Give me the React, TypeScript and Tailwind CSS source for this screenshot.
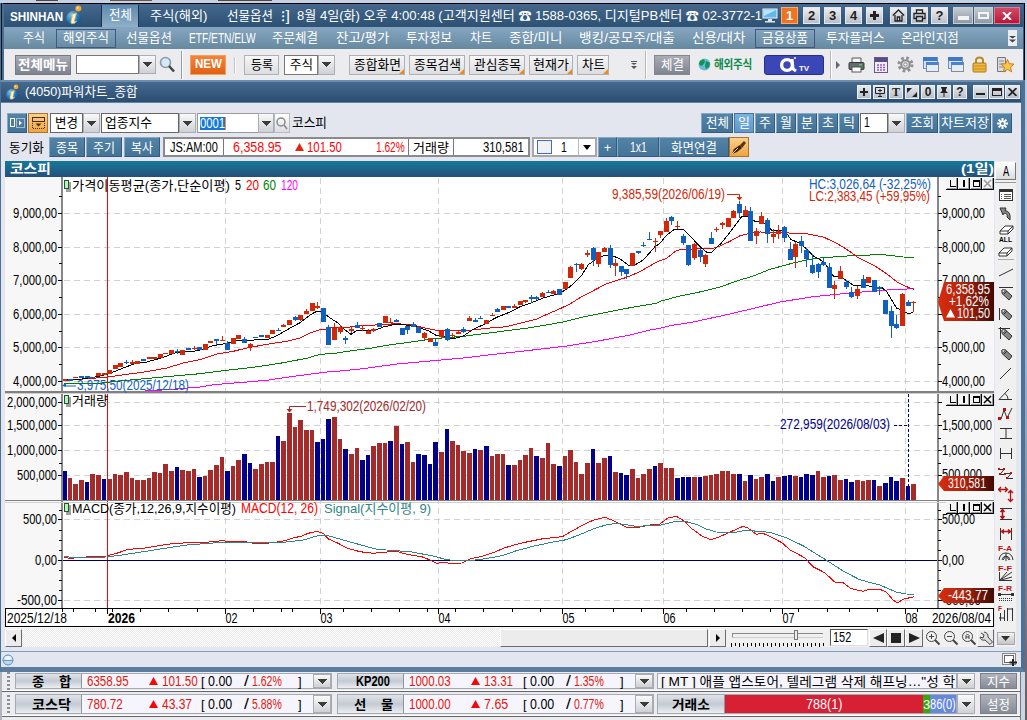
import { useLayoutEffect, useRef, type ReactNode } from "react";

const HANGUL = /[가-힣]/;

/* Text squeezed or stretched to the width of its box, like a fixed-pitch bitmap font. */
function Fit({ c, children }: { c: string; children: string }) {
  const outer = useRef<HTMLSpanElement>(null);
  const inner = useRef<HTMLSpanElement>(null);
  useLayoutEffect(() => {
    const o = outer.current;
    const i = inner.current;
    if (o && i && i.offsetWidth > 0) {
      i.style.transform = `scaleX(${o.clientWidth / i.offsetWidth})`;
    }
  });
  const size = HANGUL.test(children) || c.includes("text-[") ? "" : "text-[14px]";
  return (
    <span ref={outer} className={`block shrink-0 whitespace-nowrap ${c}`}>
      <span ref={inner} className={`inline-block origin-left whitespace-pre align-top ${size}`}>{children}</span>
    </span>
  );
}

function Arrow({ c = "" }: { c?: string }) {
  return (
    <span className={`flex shrink-0 items-center justify-center border border-[#a9adb5] bg-linear-to-b from-[#fafafa] to-[#cfd0d4] ${c}`}>
      <svg width="9" height="5" shapeRendering="crispEdges"><path d="M0 0H9L4.5 5Z" fill="#3c3c3c" /></svg>
    </span>
  );
}

const SYS = "flex h-[17px] shrink-0 items-center justify-center border border-[#e4e8ee] bg-linear-to-b from-[#eceef2] to-[#b9bfc9] text-[13px] font-bold leading-none text-[#222]";

function Sphere({ s }: { s: string }) {
  return (
    <svg className={`shrink-0 ${s}`} viewBox="0 0 16 21">
      <defs>
        <radialGradient id="ball" cx="0.35" cy="0.3" r="0.8">
          <stop offset="0" stopColor="#7cc4ee" />
          <stop offset="0.6" stopColor="#1c79bd" />
          <stop offset="1" stopColor="#0b4a86" />
        </radialGradient>
      </defs>
      <circle cx="7.5" cy="13" r="7.2" fill="url(#ball)" />
      <path d="M5 9.5L10.5 8L8.5 16Q8.6 17.6 11 16Q8 19.8 5.5 18.6Q4.3 17.8 5.2 15L6.3 10.8Z" fill="#fff3d8" stroke="#e9a53c" strokeWidth=".8" />
      <circle cx="12.3" cy="3.6" r="3" fill="#f0a83c" />
      <circle cx="11.6" cy="2.9" r="1" fill="#ffe0a0" />
    </svg>
  );
}

function Header() {
  return (
    <div className="flex h-[23px] items-center bg-linear-to-b from-[#45688c] to-[#2c5173] text-[13px] leading-[20px] text-white">
      <Fit c="ml-[6px] w-[53px] text-[13px] font-bold pt-[3px]">SHINHAN</Fit>
      <Sphere s="ml-[3px] h-[21px] w-[16px]" />
      <div className="ml-[19px] flex h-[22px] w-[38px] justify-center self-end border-l border-[#1c2f55] bg-linear-to-b from-[#5f8aae] to-[#8fb0c8] border-r">
        <Fit c="w-[23px]">전체</Fit>
      </div>
      <Fit c="ml-[11px] w-[58px]">주식(해외)</Fit>
      <Fit c="ml-[19px] w-[46px]">선물옵션</Fit>
      <Fit c="ml-[8px] w-[9px]">⁝]</Fit>
      <Fit c="ml-[7px] w-[465px]">8월 4일(화) 오후 4:00:48 (고객지원센터 ☎ 1588-0365, 디지털PB센터 ☎ 02-3772-1</Fit>
      <svg width="17" height="15" className="shrink-0" viewBox="0 0 17 15">
        <rect x="1" y="1" width="14" height="9" fill="#63b8ea" stroke="#e8f3fa" />
        <path d="M2 2H14L2 8Z" fill="#b7e2f8" />
        <path d="M6 11H10V13H13V14.5H3V13H6Z" fill="#dfe6ec" />
      </svg>
      <span className="ml-[2px] flex h-[17px] w-[17px] shrink-0 items-center justify-center border border-[#f8ad70] bg-[#ee7424] text-[13px] font-bold">1</span>
      <span className={`ml-[5px] w-[17px] ${SYS}`}>2</span>
      <span className={`ml-[4px] w-[17px] ${SYS}`}>3</span>
      <span className={`ml-[4px] w-[17px] ${SYS}`}>4</span>
      <span className={`ml-[4px] w-[17px] ${SYS}`}>
        <svg width="9" height="9" shapeRendering="crispEdges"><path d="M3 0H6V3H9V6H6V9H3V6H0V3H3Z" fill="#222" /></svg>
      </span>
      <span className={`ml-[7px] w-[17px] ${SYS}`}>
        <svg width="13" height="13" fill="none" stroke="#222" strokeWidth="1.3"><path d="M.8 6.5L6.5 1L12.2 6.5M3 6V12H10V6M5.3 12V8H7.7V12" /></svg>
      </span>
      <span className={`ml-[4px] w-[17px] ${SYS}`}>
        <svg width="13" height="13" fill="none" stroke="#222" strokeWidth="1.3"><path d="M3.5 4V1H9.5V4M3 9.5H1V4.5H12V9.5H10M3.5 7.5H9.5V12H3.5Z" /></svg>
      </span>
      <span className={`ml-[3px] w-[17px] ${SYS}`}>?</span>
      <span className="ml-[5px] flex h-[17px] w-[20px] shrink-0 items-center justify-center border border-[#c9ced4] bg-linear-to-b from-[#c4cbd1] to-[#8f9aa2]"><span className="mt-[4px] h-[4px] w-[11px] bg-[#f4f4f4]" /></span>
      <span className="ml-[1px] flex h-[17px] w-[19px] shrink-0 items-center justify-center border border-[#c9ced4] bg-linear-to-b from-[#c4cbd1] to-[#8f9aa2]"><span className="h-[7px] w-[11px] border-2 border-[#f4f4f4]" /></span>
      <span className="ml-[1px] flex h-[17px] w-[26px] shrink-0 items-center justify-center border border-[#e07a90] bg-linear-to-b from-[#d04a66] to-[#b8123a]">
        <svg width="10" height="8" stroke="#fff" strokeWidth="2"><path d="M1 0L9 8M9 0L1 8" /></svg>
      </span>
    </div>
  );
}

function Menu() {
  return (
    <div className="flex h-[22px] items-center bg-linear-to-b from-[#87a6c2] to-[#66899f] text-[13px] leading-[20px] text-white">
      <Fit c="ml-[19px] w-[22px]">주식</Fit>
      <span className="ml-[11px] flex h-[19px] w-[60px] shrink-0 items-center justify-center border border-[#3e5a82]"><Fit c="w-[46px]">해외주식</Fit></span>
      <Fit c="ml-[10px] w-[46px]">선물옵션</Fit>
      <Fit c="ml-[17px] w-[67px]">ETF/ETN/ELW</Fit>
      <Fit c="ml-[16px] w-[46px]">주문체결</Fit>
      <Fit c="ml-[18px] w-[53px]">잔고/평가</Fit>
      <Fit c="ml-[17px] w-[46px]">투자정보</Fit>
      <Fit c="ml-[18px] w-[22px]">차트</Fit>
      <Fit c="ml-[17px] w-[53px]">종합/미니</Fit>
      <Fit c="ml-[17px] w-[96px]">뱅킹/공모주/대출</Fit>
      <Fit c="ml-[17px] w-[53px]">신용/대차</Fit>
      <span className="ml-[10px] flex h-[19px] w-[60px] shrink-0 items-center justify-center border border-[#3e5a82]"><Fit c="w-[46px]">금융상품</Fit></span>
      <Fit c="ml-[11px] w-[59px]">투자플러스</Fit>
      <Fit c="ml-[16px] w-[58px]">온라인지점</Fit>
      <span className="ml-[49px] flex h-[16px] w-[9px] shrink-0 items-center justify-center bg-[#e9edf1]">
        <svg width="7" height="10" fill="#444"><path d="M1 1H6M0 3L3.5 3L7 3L3.5 5.5ZM0 6.5H7L3.5 9.5Z" /></svg>
      </span>
    </div>
  );
}

const TB = "flex h-[20px] shrink-0 items-center justify-center border border-[#b0b1b6] bg-linear-to-b from-[#f6f6f7] to-[#dcdde0] relative";

function ToolBtn({ c, w, children }: { c: string; w: string; children: string }) {
  return (
    <span className={`${TB} ${c}`}>
      <Fit c={w}>{children}</Fit>
      <svg className="absolute right-0 bottom-0" width="5" height="5"><path d="M5 0V5H0Z" fill="#f08a1c" /></svg>
    </span>
  );
}

function WindowsIcon({ c }: { c: string }) {
  return (
    <svg width="17" height="17" className={`shrink-0 ${c}`} shapeRendering="crispEdges">
      <rect x="1" y="1" width="14" height="11" fill="#d5e4f7" stroke="#6d8fc0" />
      <rect x="1" y="1" width="14" height="4" fill="#3f78c8" />
      <rect x="4" y="6" width="12" height="9" fill="#e8edf4" stroke="#7c8ca5" />
      <rect x="4" y="6" width="12" height="3" fill="#4a82cc" />
    </svg>
  );
}

function Toolbar() {
  return (
    <div className="flex h-[31px] items-center bg-[#ececee] text-[13px] leading-[19px] text-black">
      <span className="ml-[11px] flex h-[20px] w-[56px] shrink-0 items-center justify-center border border-[#777b86] bg-linear-to-b from-[#a9acb5] to-[#7e828e] text-white"><Fit c="w-[50px] font-bold">전체메뉴</Fit></span>
      <span className="ml-[5px] h-[19px] w-[63px] shrink-0 border border-[#777] bg-white" />
      <Arrow c="h-[19px] w-[17px]" />
      <svg width="17" height="17" className="ml-[3px] shrink-0"><circle cx="6.5" cy="6.5" r="5" fill="#d4eaf6" stroke="#8c9aa8" strokeWidth="1.6" /><path d="M10 10L15 15.5" stroke="#444" strokeWidth="2.6" /></svg>
      <span className="ml-[5px] h-[28px] w-[2px] shrink-0 border-r border-white bg-[#8ba0ac]" />
      <span className="ml-[7px] flex h-[20px] w-[36px] shrink-0 items-center justify-center border border-[#f0a060] bg-linear-to-b from-[#f58436] to-[#e06010] text-white"><Fit c="w-[27px] text-[12px] font-extrabold">NEW</Fit></span>
      <span className="ml-[8px] h-[16px] w-[2px] shrink-0 border-r border-white bg-[#c4c4c8]" />
      <span className={`ml-[8px] w-[35px] ${TB}`}><Fit c="w-[22px]">등록</Fit></span>
      <span className="ml-[5px] flex h-[20px] w-[34px] shrink-0 items-center justify-center border border-[#777] bg-white"><Fit c="w-[23px]">주식</Fit></span>
      <Arrow c="h-[20px] w-[17px]" />
      <ToolBtn c="ml-[14px] w-[56px]" w="w-[47px]">종합화면</ToolBtn>
      <ToolBtn c="ml-[4px] w-[56px]" w="w-[47px]">종목검색</ToolBtn>
      <ToolBtn c="ml-[4px] w-[56px]" w="w-[47px]">관심종목</ToolBtn>
      <ToolBtn c="ml-[4px] w-[44px]" w="w-[36px]">현재가</ToolBtn>
      <ToolBtn c="ml-[4px] w-[32px]" w="w-[23px]">차트</ToolBtn>
      <svg width="6" height="9" fill="#555" className="ml-[22px] shrink-0"><path d="M0 1H6V2H0ZM0 3H6L3 5ZM0 6H6L3 9Z" /></svg>
      <span className="ml-[8px] h-[28px] w-[2px] shrink-0 border-r border-white bg-[#b6b9be]" />
      <span className="ml-[7px] flex h-[20px] w-[36px] shrink-0 items-center justify-center border border-[#858893] bg-linear-to-b from-[#a9acb5] to-[#80848f] text-white"><Fit c="w-[23px]">체결</Fit></span>
      <svg width="13" height="13" className="ml-[8px] shrink-0"><circle cx="6.5" cy="6.5" r="6" fill="#69b9da" /><path d="M2 3L6 1L7 4L5 7L3 8L1 6ZM8 3L12 5L11 9L8 11L7 8Z" fill="#149250" /></svg>
      <Fit c="ml-[3px] w-[38px] pt-[2px] text-[12px] font-bold text-[#0b8a4c] tracking-tight">해외주식</Fit>
      <span className="ml-[12px] flex h-[20px] w-[60px] shrink-0 items-center justify-center rounded-[3px] border border-[#26308c] bg-[#3b47b6]">
        <svg width="20" height="17" fill="none" stroke="#fff"><circle cx="8" cy="9" r="5.4" strokeWidth="3.4" /><path d="M13 3L14 13L17 15" strokeWidth="3" /><circle cx="16" cy="2" r="1" fill="#fff" stroke="none" /></svg>
        <span className="mt-[8px] text-[8px] font-bold leading-none text-white">TV</span>
      </span>
      <span className="ml-[6px] h-[28px] w-[2px] shrink-0 border-r border-white bg-[#b6b9be]" />
      <svg width="4" height="8" className="ml-[4px] shrink-0"><path d="M0 0L4 4L0 8Z" fill="#667" /></svg>
      <svg width="17" height="16" className="ml-[8px] shrink-0"><path d="M4 1H13V6H4Z" fill="#f4f4f4" stroke="#555" /><rect x="1" y="5.5" width="15" height="7" rx="1" fill="#666b70" stroke="#33383c" /><rect x="4" y="10" width="9" height="5" fill="#fff" stroke="#555" /><rect x="11" y="7" width="3" height="1.5" fill="#4bd04b" /></svg>
      <svg width="16" height="16" className="ml-[8px] shrink-0"><rect x="1.5" y=".5" width="13" height="15" fill="#efedf5" stroke="#655a86" /><rect x="2" y="1" width="12" height="4" fill="#5b4a88" /><path d="M4 8H12M4 10.5H12M4 13H12" stroke="#9a5ac0" strokeWidth="1.5" strokeDasharray="2 1" /></svg>
      <svg width="17" height="17" className="ml-[8px] shrink-0"><circle cx="8.5" cy="8.5" r="6.5" fill="none" stroke="#8f8f8f" strokeWidth="3" strokeDasharray="2.6 2.5" /><circle cx="8.5" cy="8.5" r="4.3" fill="#d8d8d8" stroke="#8d8d8d" strokeWidth="2" /><circle cx="8.5" cy="8.5" r="1.6" fill="#fff" stroke="#888" /></svg>
      <WindowsIcon c="ml-[8px]" />
      <WindowsIcon c="ml-[8px]" />
      <svg width="15" height="17" className="ml-[8px] shrink-0"><path d="M4 8V4.5Q4 1.5 7.5 1.5T11 4.5V8" fill="none" stroke="#b98a2a" strokeWidth="2" /><rect x="1" y="7" width="13" height="9" rx="1" fill="#f0b93a" stroke="#a9781c" /><path d="M2 10H13M2 13H13" stroke="#c48d22" /></svg>
      <svg width="19" height="17" className="ml-[9px] shrink-0"><path d="M1.500 1.500H9.500V15.500H1.500Z" fill="#ddd" stroke="#777" /><path d="M3 5H8M3 8H8M3 11H8" stroke="#888" /><path d="M11.5 3.500L13.300 7.700L18 8.100L14.500 11.200L15.600 15.800L11.500 13.400L7.400 15.800L8.500 11.200L5 8.100L9.700 7.700Z" fill="#f9c74a" stroke="#d07a1c" /></svg>
    </div>
  );
}

const WB = "flex h-[14px] shrink-0 items-center justify-center border border-[#eceff3] bg-linear-to-b from-[#e6e9ee] to-[#b8bec9] text-[12px] font-bold leading-none text-[#222]";

function TitleBar() {
  return (
    <div className="flex h-[21px] shrink-0 items-center border-b border-[#5c86a6] bg-linear-to-b from-[#46698e] to-[#2a4d71] text-[13px] leading-[18px] text-white">
      <Sphere s="ml-[5px] h-[17px] w-[13px]" />
      <Fit c="ml-[6px] w-[113px]">(4050)파워차트_종합</Fit>
      <span className={`ml-auto w-[14px] ${WB}`}><svg width="8" height="8" shapeRendering="crispEdges"><path d="M3 0H5V3H8V5H5V8H3V5H0V3H3Z" fill="#222" /></svg></span>
      <span className={`ml-[2px] w-[14px] ${WB}`}><svg width="10" height="10" fill="none" stroke="#222"><path d="M.5 .5H9.500V6.500H.5ZM3 9.500H7M5 7V9M3 3.500H7M5 2V5" /></svg></span>
      <span className={`ml-[2px] w-[14px] ${WB} font-['Liberation_Serif',serif]`}>T</span>
      <span className={`ml-[2px] w-[14px] ${WB}`}><svg width="10" height="9" fill="#222"><path d="M0 0H5L0 5ZM10 9H5L10 4Z" /></svg></span>
      <span className={`ml-[2px] w-[14px] ${WB}`}>0</span>
      <span className={`ml-[2px] w-[14px] ${WB}`}><svg width="8" height="10" fill="#222"><path d="M1 0H7V1.500H6V4L8 6H4.500V10H3.500V6H0L2 4V1.500H1Z" /></svg></span>
      <span className={`ml-[2px] w-[14px] ${WB}`}>?</span>
      <span className={`ml-[6px] w-[15px] ${WB}`}><span className="mt-[4px] h-[2px] w-[9px] bg-[#222]" /></span>
      <span className={`ml-[1px] w-[15px] ${WB}`}><span className="h-[8px] w-[10px] border border-t-[3px] border-[#222]" /></span>
      <span className={`mr-[1px] ml-[1px] w-[15px] ${WB}`}><svg width="9" height="8" stroke="#222" strokeWidth="1.800"><path d="M.5 0L8.500 8M8.500 0L.5 8" /></svg></span>
    </div>
  );
}

const BB = "flex h-[20px] shrink-0 items-center justify-center border border-[#335a80] border-t-[#86a9c4] border-l-[#86a9c4] bg-linear-to-b from-[#5383a6] to-[#437397] text-white";
const OR = "flex h-[20px] shrink-0 items-center justify-center border border-[#a8762c] bg-linear-to-b from-[#fcd08a] to-[#f0a43c]";

function Row1() {
  return (
    <div className="flex h-[20px] items-center text-[13px] leading-[18px] text-black">
      <span className={`ml-[6px] w-[20px] ${BB}`}><svg width="15" height="12" fill="none" stroke="#fff"><rect x=".5" y="1.500" width="4" height="8" /><rect x="6.500" y="1.500" width="8" height="9" strokeDasharray="1 1" /><path d="M9 3.500L12 6L9 8.500Z" fill="#fff" stroke="none" /></svg></span>
      <span className={`ml-[1px] w-[20px] ${OR}`}><svg width="15" height="14" fill="none" stroke="#4a2a00"><rect x="1.500" y="1.500" width="12" height="4" /><path d="M1.500 7V12.500H13.500V7" strokeDasharray="1 1" /><path d="M4.500 7.500H10.500L7.500 10.500Z" fill="#4a2a00" stroke="none" /></svg></span>
      <span className="ml-[2px] flex h-[20px] w-[33px] shrink-0 items-center justify-center border border-[#666] bg-white"><Fit c="w-[23px]">변경</Fit></span>
      <Arrow c="h-[20px] w-[17px]" />
      <span className="ml-[1px] flex h-[20px] w-[78px] shrink-0 items-center border border-[#666] bg-white pl-[3px]"><Fit c="w-[47px]">업종지수</Fit></span>
      <Arrow c="h-[20px] w-[17px]" />
      <span className="ml-[1px] flex h-[20px] w-[68px] shrink-0 items-center border border-[#999] bg-white pl-[2px]"><span className="flex h-[13px] items-center border-r border-[#ff8a2a] bg-[#1478d8] text-white"><Fit c="w-[25px]">0001</Fit></span></span>
      <Arrow c="-ml-[7px] h-[20px] w-[16px]" />
      <span className="flex h-[20px] w-[16px] shrink-0 items-center justify-center border border-[#b8bac0] bg-linear-to-b from-white to-[#dcdde1]"><svg width="12" height="13" fill="none" stroke="#888" strokeWidth="1.500"><circle cx="5" cy="5" r="4" /><path d="M8 8L11 12" /></svg></span>
      <Fit c="ml-[2px] w-[35px]">코스피</Fit>
      <span className={`ml-auto w-[32px] ${BB}`}><Fit c="w-[23px]">전체</Fit></span>
      <span className="ml-[1px] flex h-[20px] w-[20px] shrink-0 items-center justify-center border border-[#4b7299] bg-linear-to-b from-[#78b2e0] to-[#6098c8] text-white">일</span>
      <span className={`ml-[1px] w-[20px] ${BB}`}>주</span>
      <span className={`ml-[1px] w-[20px] ${BB}`}>월</span>
      <span className={`ml-[1px] w-[20px] ${BB}`}>분</span>
      <span className={`ml-[1px] w-[20px] ${BB}`}>초</span>
      <span className={`ml-[1px] w-[20px] ${BB}`}>틱</span>
      <span className="ml-[1px] h-[20px] w-[28px] shrink-0 border border-[#666] bg-white pl-[3px] leading-[17px]"><Fit c="w-[6px]">1</Fit></span>
      <Arrow c="h-[20px] w-[17px]" />
      <span className={`ml-[1px] w-[32px] ${BB}`}><Fit c="w-[23px]">조회</Fit></span>
      <span className={`ml-[1px] w-[52px] ${BB}`}><Fit c="w-[48px]">차트저장</Fit></span>
      <span className={`mr-[9px] ml-[1px] w-[20px] ${BB}`}><svg width="11" height="11" stroke="#fff" strokeWidth="2"><path d="M5.500 0V11M0 5.500H11M1.600 1.600L9.400 9.400M9.400 1.600L1.600 9.400" /><circle cx="5.500" cy="5.500" r="1.500" fill="#4f80a4" stroke="none" /></svg></span>
    </div>
  );
}

function Row2() {
  return (
    <div className="mt-[4px] flex h-[20px] items-center text-[13px] leading-[17px] text-black">
      <Fit c="ml-[8px] w-[35px]">동기화</Fit>
      <span className={`ml-[5px] w-[36px] ${BB}`}><Fit c="w-[22px]">종목</Fit></span>
      <span className={`ml-[1px] w-[36px] ${BB}`}><Fit c="w-[22px]">주기</Fit></span>
      <span className={`ml-[2px] w-[36px] ${BB}`}><Fit c="w-[22px]">복사</Fit></span>
      <span className="ml-[3px] flex h-[20px] w-[367px] shrink-0 items-center border-2 border-[#8b8b8b] bg-white">
        <span className="flex h-full w-[59px] shrink-0 justify-center border-r border-[#777]"><Fit c="w-[48px]">JS:AM:00</Fit></span>
        <span className="flex h-full w-[185px] shrink-0 items-center border-r border-[#777] text-[#f80808]">
          <Fit c="ml-[9px] w-[49px]">6,358.95</Fit>
          <svg width="9" height="8" className="ml-[13px] shrink-0"><path d="M4.500 0L9 8H0Z" fill="#e02810" /></svg>
          <Fit c="ml-[3px] w-[35px]">101.50</Fit>
          <Fit c="ml-[34px] w-[29px]">1.62%</Fit>
        </span>
        <span className="flex h-full w-[45px] shrink-0 justify-center border-r border-[#777]"><Fit c="w-[36px]">거래량</Fit></span>
        <Fit c="ml-[29px] w-[41px]">310,581</Fit>
      </span>
      <span className="ml-[2px] flex h-[20px] w-[65px] shrink-0 items-center border-2 border-[#a8a8a8] bg-white">
        <span className="ml-[3px] h-[14px] w-[15px] border border-[#4069d8] bg-[#f0f1f5]" />
        <Fit c="mr-[10px] ml-[9px] w-[6px]">1</Fit>
        <span className="ml-auto flex h-full w-[17px] items-center justify-center border-l border-[#bbb]"><svg width="8" height="5"><path d="M0 0H8L4 5Z" /></svg></span>
      </span>
      <span className={`ml-[1px] w-[19px] ${BB}`}>+</span>
      <span className={`w-[42px] ${BB}`}><Fit c="w-[17px]">1x1</Fit></span>
      <span className={`w-[70px] ${BB}`}><Fit c="w-[46px]">화면연결</Fit></span>
      <span className={`w-[20px] ${OR}`}><svg width="16" height="15"><path d="M1 14L3 9L9 5L11 8L6 12Z" fill="#3a2208" /><path d="M9 5L13 1L15 3L11 8Z" fill="#5a3510" /><path d="M1 14L7 8" stroke="#f0d0a0" /></svg></span>
    </div>
  );
}

/* ---------------- chart data ---------------- */
const barX = (i: number) => Math.round(62.2 + 5.6225 * i);

/* colour and height of each volume bar, in thirds of a pixel from y = 390 */
const VOLUME =
  "b243 r264 r282 r270 b276 r252 r255 b267 r267 r252 r255 r246 r264 r270 r270 r264 r246 r249 r222 r243 b231 r240 r243 r237 b261 r258 r240 r225 r201 b243 r228 r210 b192 b219 r237 r222 r216 r216 b138 r153 r69 r111 r90 r120 r120 b156 b147 b87 r81 r147 b177 r192 r174 b210 b195 r168 r159 r159 b153 r108 b162 r156 r216 b192 b195 b222 b156 r186 b117 r153 r165 r183 r189 b177 r180 b168 r198 r192 r192 b225 r225 r210 r195 r174 b198 r204 r159 r222 b228 r198 r180 r216 r252 r219 b177 r219 r204 b198 r246 b249 b255 r237 r264 r252 r237 b228 r219 r234 r234 b264 b261 b261 r261 b261 r258 r255 r252 r243 r243 r252 b252 r273 b255 r267 r261 b252 b273 r261 b258 b255 r258 b261 b252 b255 r243 r261 b258 r255 r270 b267 b276 r270 r273 r270 b270 r288 b279 b261 b273 r264 b288 r282".split(" ");

/* colour, body top, body bottom, high, low; thirds of a pixel from y = 180 */
const CANDLES =
  "r598,604 b598,602 r592,595 b588,594 b588,594 b590,595 r579,588 r579,586 r570,582 r555,567 r548,560 b545,548,540,552 r546,551,540,551 r543,552 b537,543 r530,537 r530,537 r521,535 r518,521 r510,522 b513,516,507,522 r510,525 b503,510 r504,507,498,510 b501,510 r492,509 r483,489 b478,482,478,495 r480,483,469,483 b489,510,484,510 r474,491 r465,477 b477,489,471,489 r492,502,489,513 b470,473 b465,472 r465,474 r450,462 b449,452,444,452 r435,441,432,441 r420,435 b411,420,407,423 r405,420,405,423 r393,402,387,402 r369,393 r378,384,366,387 b384,426 b441,495,434,495 r444,480,429,480 r442,456,436,462 b474,480,468,492 r447,453,441,460 b435,443,427,443 r443,446,436,453 r453,462,447,462 r447,453,443,456 b429,441 r407,429 r427,430,414,430 b420,426,416,426 b444,465 b437,450,437,462 b432,441,426,441 b441,459 r459,474,455,480 r473,486 b486,498,476,498 r454,471,450,474 b447,480,444,484 r465,468,459,474 r456,462,452,462 b447,456,441,459 r414,423,407,423 b420,426,414,426 b413,416,408,416 r420,432 r404,407,399,407 b387,396,384,396 r378,390 b378,383 r378,384,372,384 r363,375 r360,366,360,369 b351,357,345,369 b351,356,348,360 r339,351,335,351 b335,338,330,338 r333,342,329,342 b327,345 r306,327 r261,294,257,294 b252,255,249,276 r252,267,249,270 r219,225,210,230 b204,240,201,257 r216,252,216,261 r204,216,200,216 b204,255,195,263 r249,258,237,288 b257,276,257,288 b267,282,267,297 r219,257 b213,219,213,222 b195,198,186,201 b177,180,156,180 r182,185,174,216 r153,165,153,173 r123,156,114,156 b111,123,108,135 r138,141,123,147 b168,188,162,195 b195,255,195,258 r192,234,189,240 b210,231,203,245 r225,252,222,261 b174,191,156,191 r147,150,141,155 r129,135,126,147 r114,140 r93,114,90,114 b72,99,63,114 r90,108,78,108 b93,183,82,183 r153,168,144,192 r108,132,97,132 b120,162,114,188 r162,171,147,188 r153,162,135,176 b141,174,138,186 b207,240,186,240 r192,231,186,264 b183,198,168,218 b210,237,204,261 b255,279,222,282 b252,276,248,294 b246,255,234,258 b261,324,249,324 r315,327,303,357 r273,297,259,297 b306,321,300,327 b336,351,321,354 r327,348,318,357 b297,324,285,324 r291,309 b300,336 b321,327,318,345 b360,402 b393,438,378,474 b432,444,405,447 r342,438,339,438 b366,378,361,378 r366,369,363,396".split(" ");

type Curve = { color: string; parts: [number, number, string][] };
const CURVES: Curve[] = [
  {
    color: "#ff00ff",
    parts: [
      [0, 180, "420,634 500,629 600,621 640,614 740,606 800,601 860,592 940,581 990,575"],
      [330, 180, "0,576 100,566 200,552 300,543 400,534 500,522 600,511 710,498 800,484 900,465 960,450 990,445"],
      [660, 180, "0,445 30,437 100,426 200,404 260,390 360,366 460,350 560,340 680,330 762,326"],
    ],
  },
  {
    color: "#008000",
    parts: [
      [0, 180, "193,612 300,610 330,606 400,599 500,590 600,581 680,571 760,562 840,550 920,535 960,523 990,521"],
      [330, 180, "0,522 60,513 120,505 170,496 250,485 310,476 400,469 500,456 600,443 700,426 760,411 830,397 900,383 980,370 990,364"],
      [660, 180, "0,364 60,348 110,338 180,321 240,300 280,288 330,268 400,249 440,240 480,234 520,231 590,226 670,224 730,231 762,232"],
    ],
  },
  {
    color: "#f00000",
    parts: [
      [0, 180, "193,601 250,597 325,591 380,583 440,575 500,564 550,549 600,539 650,522 700,514 740,504 800,493 860,484 900,474 930,459 960,449 990,447"],
      [330, 180, "0,444 60,441 100,437 200,431 250,435 280,443 320,451 430,450 470,445 530,440 570,430 620,417 660,399 690,386 720,372 750,353 790,332 830,311 890,292 930,275 970,252 990,242"],
      [660, 180, "0,242 20,235 50,211 70,208 160,205 175,200 210,184 240,167 260,162 300,156 380,157 400,162 440,161 490,171 530,190 560,208 590,230 640,255 680,281 710,305 740,320 762,328"],
    ],
  },
  {
    color: "#000000",
    parts: [
      [0, 180, "193,600 245,597 290,590 325,582 345,574 375,562 405,551 440,546 470,538 500,528 520,520 548,516 580,514 600,510 640,497 680,490 710,482 740,482 770,479 805,478 830,467 860,450 900,428 935,402 950,394 963,393 990,414"],
      [330, 180, "0,414 20,426 45,450 63,463 80,452 130,453 160,441 200,432 235,436 265,442 295,452 318,466 340,468 360,475 375,475 400,468 430,448 460,434 500,412 540,396 570,380 600,370 640,354 690,340 720,320 755,286 775,254 800,237 825,225 850,228 870,237 895,255 915,255 940,240 975,200 990,190"],
      [660, 180, "0,190 20,165 45,147 70,147 90,168 120,200 140,217 155,217 185,188 215,150 245,110 262,108 285,124 310,127 335,150 360,150 380,160 392,178 415,188 440,207 460,228 485,242 500,258 520,288 545,292 580,316 620,316 640,322 665,322 680,335 710,385 725,390 745,402 760,397"],
    ],
  },
  {
    color: "#ff0000",
    parts: [
      [0, 390, "193,503 215,505 240,502 320,498 350,490 385,478 430,475 500,463 560,458 620,457 665,452 700,455 740,456 760,460 810,459 850,453 880,444 905,438 925,430 950,424 970,430 985,447 1015,460 1040,474 1080,485 1120,490 1150,487 1190,484 1220,493 1265,500 1295,512 1310,520 1330,517 1350,520 1385,519 1410,507 1450,498 1480,488 1510,475 1539,466"],
      [513, 390, "0,466 30,458 90,446 148,440 170,427 210,405 240,391 275,382 300,391 345,414 370,413 410,405 440,402 465,384 490,379 515,394 535,415 570,440 595,449 620,440 650,427 690,409 705,414 730,433 750,430 780,444 808,459 830,479 875,503 900,530 935,548 965,576 990,578 1015,596 1050,604 1070,598 1100,598 1120,606 1140,630 1153,639 1170,628 1203,620"],
    ],
  },
  {
    color: "#2f8585",
    parts: [
      [0, 390, "193,500 220,502 320,501 360,496 430,485 500,474 560,465 640,459 700,457 850,457 910,450 950,438 980,436 1030,450 1080,464 1130,478 1230,485 1300,498 1340,509 1370,512 1400,513 1450,507 1480,502 1510,496 1539,486"],
      [513, 390, "0,485 60,469 120,456 160,449 200,434 240,417 275,406 310,400 370,409 440,406 480,396 520,395 550,403 580,417 610,426 660,428 700,421 770,427 820,443 870,467 910,492 950,517 990,543 1040,569 1100,585 1150,606 1180,612 1203,613"],
    ],
  },
];

const toPx = ([ox, oy, s]: [number, number, string]) =>
  s.split(" ").map((p) => {
    const [x, y] = p.split(",").map(Number);
    return `${(ox + x / 3).toFixed(1)},${(oy + y / 3).toFixed(1)}`;
  }).join(" ");

function Tx({ x, y, w, f = "#000", b, children }: { x: number; y: number; w: number; f?: string; b?: boolean; children: string }) {
  return (
    <text x={x} y={y} textLength={w} lengthAdjust="spacingAndGlyphs" fill={f} fontSize={HANGUL.test(children) ? 13 : 14} fontWeight={b ? 700 : 400} xmlSpace="preserve">{children}</text>
  );
}

const PRICE: [number, string][] = [[213.5, "9,000,00"], [247.5, "8,000,00"], [280.5, "7,000,00"], [314.5, "6,000,00"], [347.5, "5,000,00"], [381.5, "4,000,00"]];
const VOLS: [number, string][] = [[402.5, "2,000,000"], [425.5, "1,500,000"], [450.5, "1,000,000"], [475.5, "500,000"]];
const MONTHS: [number, string][] = [[225.5, "02"], [320.5, "03"], [438.5, "04"], [562.5, "05"], [663.5, "06"], [782.5, "07"], [905.5, "08"]];
const YTICKS = [196.5, 230.5, 263.5, 297.5, 331.5, 364.5, 414.5, 438.5, 463.5, 510.5, 530.5, 540.5, 550.5, 570.5, 580.5, 590.5];
const XTICKS = [62.5, 73.5, 95.5, 112.5, 140.5, 168.5, 197.5, 253.5, 281.5, 292.5, 343.5, 371.5, 399.5, 427.5, 455.5, 483.5, 512.5, 540.5, 585.5, 613.5, 641.5, 686.5, 714.5, 742.5, 770.5, 798.5, 827.5, 849.5, 877.5, 917.5];

function PanelButtons({ y, off }: { y: number; off?: boolean }) {
  const x = [946, 958, 970, 982];
  return (
    <g shapeRendering="crispEdges">
      {x.map((v) => (
        <g key={v}>
          <rect x={v} y={y} width="12" height="12" fill="#f4f4f4" />
          <path d={`M${v} ${y + 11.5}H${v + 11.5}V${y}`} stroke="#000" fill="none" />
          <path d={`M${v + 1} ${y + 10.5}H${v + 10.5}V${y}`} stroke="#999" fill="none" />
        </g>
      ))}
      <path d={`M950.500 ${y + 2}V${y + 8.5}H956`} stroke="#000" fill="none" />
      <rect x="963" y={y + 2} width="2" height="7" />
      <path d={`M973.500 ${y + 2.5}H979.500V${y + 8.5}H973.500ZM973 ${y + 3.5}H980`} stroke="#000" fill="none" />
      <path d={`M984 ${y + 2}L991 ${y + 9}M991 ${y + 2}L984 ${y + 9}`} stroke={off ? "#999" : "#000"} strokeWidth="1.500" shapeRendering="auto" />
    </g>
  );
}

function Marker({ y }: { y: number }) {
  return (
    <g>
      <rect x="66" y={y + 2} width="5" height="10" fill="#a0a0a0" />
      <rect x="64.500" y={y + .5} width="4" height="8" fill="#b5f5b5" stroke="#24503c" />
    </g>
  );
}

function Chart() {
  return (
    <svg width="989" height="451" viewBox="5 177 989 451" className="block">
      <defs>
        <linearGradient id="tag"><stop offset="0" stopColor="#d82c0c" /><stop offset=".4" stopColor="#b8260e" /><stop offset="1" stopColor="#400a04" /></linearGradient>
        <clipPath id="plot"><rect x="62" y="177" width="876" height="214" /></clipPath>
      </defs>
      <rect x="5" y="177" width="989" height="451" fill="#f7f7f7" />
      <rect x="63" y="177" width="875" height="431" fill="#fff" />
      <g shapeRendering="crispEdges">
        <g stroke="#d2d2d2" strokeDasharray="6 4" fill="none">
          {MONTHS.map(([x]) => <path key={x} d={`M${x} 178V608`} />)}
          {[...PRICE, ...VOLS].map(([y]) => <path key={y} d={`M64 ${y}H937`} />)}
          <path d="M64 519.500H937M64 600.500H937" />
        </g>
        <path d="M107.500 177V608" stroke="#f00" />
        {VOLUME.map((v, i) => {
          const y = Math.round(390 + Number(v.slice(1)) / 3);
          return <rect key={i} x={barX(i)} y={y} width={barX(i + 1) - barX(i) - 1} height={500 - y} fill={v[0] === "b" ? "#00008b" : "#a52a2a"} />;
        })}
        {CURVES.slice(0, 4).map((c) => c.parts.map((p, k) => <polyline key={c.color + k} points={toPx(p)} fill="none" stroke={c.color} strokeWidth="1" clipPath="url(#plot)" />))}
        {CANDLES.map((s, i) => {
          const [t, b, h, l] = s.slice(1).split(",").map(Number);
          const col = s[0] === "b" ? "#1060c0" : "#d02808";
          const y = Math.round(180 + t / 3);
          const yb = Math.max(y + 1, Math.round(180 + b / 3));
          const yh = Math.round(180 + (h ?? t) / 3);
          const yl = Math.round(180 + (l ?? b) / 3);
          return (
            <g key={i} fill={col}>
              <rect x={barX(i)} y={y} width="5" height={yb - y} />
              <rect x={barX(i) + 2} y={yh} width="1" height={Math.max(1, yl - yh)} />
            </g>
          );
        })}
        <path d="M62 560.500H937" stroke="#000060" />
        {CURVES.slice(4).map((c) => c.parts.map((p, k) => <polyline key={c.color + k} points={toPx(p)} fill="none" stroke={c.color} strokeWidth="1" />))}
        <path d="M62 177V608M938 177V608" stroke="#888" strokeWidth="1.500" />
        <path d="M5 392H994M5 500.500H994" stroke="#808080" strokeWidth="1.500" />
        <path d="M5 393.500H994M5 502H994" stroke="#d0d0d0" />
        <g stroke="#000">
          {[...PRICE, ...VOLS].map(([y]) => <path key={y} d={`M58 ${y}H62M938 ${y}H942`} />)}
          {[519.5, 560.5, 600.5].map((y) => <path key={y} d={`M58 ${y}H62M938 ${y}H942`} />)}
          {YTICKS.map((y) => <path key={y} d={`M59 ${y}H62M938 ${y}H941`} />)}
        </g>
      </g>
      {PRICE.map(([y, t]) => <g key={y}><Tx x={13} y={y + 4.5} w={44}>{t}</Tx><Tx x={942} y={y + 4.5} w={43}>{t}</Tx></g>)}
      {VOLS.map(([y, t], i) => (
        <g key={y}>
          <Tx x={i === 3 ? 17 : 7} y={y + 4.5} w={i === 3 ? 40 : 50}>{t}</Tx>
          {i > 0 && <Tx x={942} y={y + (i === 3 ? 3.5 : 4.5)} w={i === 3 ? 40 : 50}>{t}</Tx>}
        </g>
      ))}
      <Tx x={23} y={524} w={34}>500,00</Tx>
      <Tx x={35} y={565} w={22}>0,00</Tx>
      <Tx x={17} y={605} w={40}>-500,00</Tx>
      <Tx x={942} y={524} w={33}>500,00</Tx>
      <Tx x={942} y={565} w={22}>0,00</Tx>
      <Tx x={942} y={605} w={39}>-500,00</Tx>

      <Marker y={180} />
      <Tx x={72} y={190} w={158}>가격이동평균(종가,단순이평)</Tx>
      <Tx x={235} y={190} w={6}>5</Tx>
      <Tx x={246} y={190} w={13} f="#f00">20</Tx>
      <Tx x={263} y={190} w={13} f="#008000">60</Tx>
      <Tx x={281} y={190} w={17} f="#f0f">120</Tx>
      <Marker y={395} />
      <Tx x={72} y={405} w={36}>거래량</Tx>
      <Marker y={503} />
      <Tx x={72} y={513} w={164}>MACD(종가,12,26,9,지수이평)</Tx>
      <Tx x={241} y={513} w={77} f="#f00">MACD(12, 26)</Tx>
      <Tx x={324} y={513} w={107} f="#2f8585">Signal(지수이평, 9)</Tx>

      <Tx x={809} y={189} w={122} f="#1060c0">HC:3,026,64 (-32,25%)</Tx>
      <Tx x={809} y={201} w={121} f="#d02808">LC:2,383,45 (+59,95%)</Tx>
      <Tx x={612} y={199} w={113} f="#d02808">9,385,59(2026/06/19)</Tx>
      <path d="M727 194.500H739.500V200" fill="none" stroke="#d02808" /><path d="M736.500 197H742.500L739.500 200.500Z" fill="#d02808" />
      <Tx x={77} y={390} w={112} f="#1060c0">3,975,50(2025/12/18)</Tx>
      <path d="M64 386H76" stroke="#1060c0" /><path d="M62 386L66 382.500V386.500Z" fill="#1060c0" />
      <Tx x={307} y={411} w={119} f="#a52a2a">1,749,302(2026/02/20)</Tx>
      <path d="M306 406.500H289.500V411" fill="none" stroke="#a52a2a" /><path d="M286.500 409H292.500L289.500 412.500Z" fill="#a52a2a" />
      <Tx x={780} y={429} w={110} f="#00008b">272,959(2026/08/03)</Tx>
      <path d="M894 425.500H908M908.500 394V486" stroke="#00008b" strokeDasharray="3 2" fill="none" shapeRendering="crispEdges" />

      <path d="M938 302L944 282H994V321H944Z" fill="url(#tag)" />
      <Tx x={946} y={294} w={44} f="#fff">6,358,95</Tx>
      <Tx x={949} y={306} w={40} f="#fff">+1,62%</Tx>
      <path d="M946 317.500H955L950.500 309Z" fill="#fff" />
      <Tx x={957} y={318} w={33} f="#fff">101,50</Tx>
      <path d="M938 484L944 476H994V491H944Z" fill="url(#tag)" />
      <Tx x={948} y={488} w={38} f="#fff">310,581</Tx>
      <path d="M938 596L944 588H994V603H944Z" fill="url(#tag)" />
      <Tx x={948} y={600} w={40} f="#fff">-443,77</Tx>

      <PanelButtons y={178} off />
      <PanelButtons y={394} />
      <PanelButtons y={502} />

      <rect x="5.500" y="608.500" width="988" height="18" fill="#fff" stroke="#000" shapeRendering="crispEdges" />
      <g stroke="#000" shapeRendering="crispEdges">
        {MONTHS.map(([x]) => <path key={x} d={`M${x} 608V614`} />)}
        <path d="M107.500 608V614" />
        {XTICKS.map((x) => <path key={x} d={`M${x} 608V612`} />)}
      </g>
      <Tx x={7} y={623} w={60}>2025/12/18</Tx>
      <Tx x={108} y={623} w={27} b>2026</Tx>
      {MONTHS.map(([x, t]) => <Tx key={x} x={x} y={623} w={12}>{t}</Tx>)}
      <Tx x={932} y={623} w={59}>2026/08/04</Tx>
    </svg>
  );
}

const PENCIL = <g><path d="M4 6L7.500 6L14 12L11 16L4 9.500Z" fill="#888" stroke="#333" /><path d="M4 6L7.500 6L4.500 9.500Z" fill="#fff" stroke="#333" strokeWidth=".7" /><path d="M6 10L9 7" stroke="#333" /></g>;
const ERASER = <path d="M1 11L6 6H14L9 11ZM1 11V14H9V11M9 14L14 9V6" fill="#fff" stroke="#333" />;
const RED = "#b81010";
const lab = (t: string) => <text x="0" y="7" fontSize="8" fontWeight="700" fill={RED} textLength={t.length > 1 ? 14 : 4} lengthAdjust="spacingAndGlyphs">{t}</text>;
const TOOLS: ReactNode[] = [
  <g><rect x="1.500" y="5.500" width="13" height="11" fill="#fff" stroke="#333" /><path d="M1 7H15" stroke="#333" strokeWidth="2" /><path d="M3 10.500H4M3 12.500H4M3 14.500H4M6 10.500H13M6 12.500H13M6 14.500H13" stroke="#555" /></g>,
  <path d="M2 4H8L7 6.500Q13 7 12 16L9 13Q10 9.500 6 9L5 11Z" fill="#888" stroke="#333" />,
  <g><g transform="translate(1 -4)">{ERASER}</g><text x="1" y="17.500" fontSize="7.500" fontWeight="700" textLength="13" lengthAdjust="spacingAndGlyphs">ALL</text></g>,
  <g><g transform="translate(0 -2)">{ERASER}</g><path d="M0 15.500H16" stroke="#aaa" /></g>,
  <path d="M1 12L15 5" stroke="#333" />,
  <g><path d="M1 3.500H15" stroke="#333" />{PENCIL}</g>,
  <g><path d="M1.500 4V16" stroke="#333" />{PENCIL}</g>,
  <g><path d="M.5 4.500H12M2.500 3V15" stroke="#333" />{PENCIL}</g>,
  PENCIL,
  <path d="M2 15L13 4" stroke="#333" />,
  <path d="M1 15.500H14M1 15.500L11 5M7 9.500Q10 12 10 15" fill="none" stroke="#333" />,
  <g><path d="M3 15L6 6L9 14L14 4" fill="none" stroke="#333" /><path d="M0 13H3V16H0ZM5 4H8V7H5ZM8 12H11V15H8Z" fill={RED} /></g>,
  <path d="M2 4.500H14M2 14.500H14M8 4.500V14.500" stroke="#333" />,
  <path d="M2.500 4V15M13.500 4V15M2.500 9.500H13.500" stroke="#333" />,
  <g><path d="M1 5.500H6L2 10.500H7M8 9.500H13L9 14.500H15" fill="none" stroke="#333" /><path d="M0 4H2V6H0ZM5 4H7V6H5ZM1 9H3V11H1ZM6 9H8V11H6ZM12 8H14V10H12ZM8 13H10V15H8Z" fill={RED} /></g>,
  <path d="M1 5.500H9M3 3L.5 5.500L3 8M7 3L9.500 5.500L7 8M12.500 7V17M10 9L12.500 6.500L15 9M10 15L12.500 17.500L15 15" fill="none" stroke={RED} strokeWidth="1.300" />,
  <g><path d="M2 4.500H14M2 15.500H14" stroke="#333" /><path d="M4.500 6V14M2.500 8L4.500 5.500L6.500 8M2.500 12L4.500 14.500L6.500 12" fill="none" stroke={RED} strokeWidth="1.500" /></g>,
  <g><path d="M2.500 4V16M13.500 4V16" stroke="#333" /><path d="M4 7.500H12M6 5.500L3.500 7.500L6 9.500M10 5.500L12.500 7.500L10 9.500" fill="none" stroke={RED} strokeWidth="1.500" /></g>,
  <g>{lab("F-A")}<path d="M1 16Q2 9 8 9T15 16M4 16Q5 12 8 12T12 16M8 9V17M8 12L5 16M8 12L11 16" fill="none" stroke="#333" /></g>,
  <g>{lab("F-F")}<path d="M1.500 8V16.500H14M1.500 16.500L14 8M1.500 16.500L9 8M1.500 16.500L14 13" fill="none" stroke="#333" /></g>,
  <g>{lab("F-R")}<path d="M1 10.500H15" stroke="#333" /><path d="M0 9H3V12H0ZM13 9H16V12H13Z" fill="#333" /><path d="M1 14.500H15M1 16.500H15" stroke="#333" strokeDasharray="1 1" /></g>,
  <g>{lab("F")}<path d="M2.500 9V17M6.500 6V17M9.500 4V17M14.500 4V17M1 14H6M9.500 5H14" fill="none" stroke="#333" /></g>,
];

function SideTools() {
  return (
    <div className="flex h-[486px] w-[21px] shrink-0 flex-col items-center bg-[#f0f0f0]">
      <span className="mt-[1px] flex h-[18px] w-[21px] shrink-0 items-center justify-center border border-t-white border-r-[#777] border-b-[#777] border-l-white bg-linear-to-b from-white to-[#dcdcdc] text-[12px] leading-none"><Fit c="w-[6px]">A</Fit></span>
      <span className="mt-[2px] h-[2px] w-full shrink-0 border-t border-[#999]" />
      {TOOLS.map((t, i) => (
        <svg key={i} width="16" height="20" viewBox="0 0 16 20" className="shrink-0">{t}</svg>
      ))}
      <span className="mt-[8px] flex h-[13px] w-[18px] shrink-0 items-center justify-center border border-[#aaa] bg-linear-to-b from-[#f4f4f4] to-[#c4c4c4]"><svg width="9" height="5"><path d="M0 0H9L4.500 5Z" fill="#333" /></svg></span>
    </div>
  );
}

const SB = "flex h-[18px] shrink-0 items-center justify-center border border-t-white border-r-[#6c6c6c] border-b-[#6c6c6c] border-l-white bg-[#ececec]";

function Lens({ c, children }: { c: string; children: ReactNode }) {
  return <svg width="16" height="16" className={`shrink-0 ${c}`} fill="none" stroke="#444"><circle cx="6.500" cy="6.500" r="5" /><path d="M10 10L14.500 14.500" strokeWidth="2" />{children}</svg>;
}

function ScrollRow() {
  return (
    <div className="flex h-[19px] w-[989px] items-center bg-[#f0f0f0] text-[13px]">
      <span className={`w-[17px] ${SB}`}><svg width="4" height="8"><path d="M4 0V8L0 4Z" /></svg></span>
      <span className="h-[18px] w-[478px] shrink-0 bg-[repeating-conic-gradient(#ffffff_0_25%,#e9e9e9_0_50%)] bg-[length:2px_2px]" />
      <span className={`w-[208px] ${SB}`} />
      <span className={`ml-[1px] w-[17px] ${SB}`}><svg width="4" height="8"><path d="M0 0V8L4 4Z" /></svg></span>
      <svg width="96" height="18" className="ml-[4px] shrink-0" shapeRendering="crispEdges">
        <path d="M2 7.500V4.500H93" fill="none" stroke="#888" /><path d="M2 8.500H93" stroke="#ccc" />
        <rect x="64.500" y="1.500" width="3" height="9" fill="#eee" stroke="#777" />
        {Array.from({ length: 24 }, (_, i) => <path key={i} d={`M${1.5 + i * 4} 14V${i % 2 ? 17 : 18}`} stroke="#000" />)}
      </svg>
      <span className="ml-[4px] flex h-[17px] w-[38px] shrink-0 items-center border border-r-[#ddd] border-b-[#ddd] border-t-[#555] border-l-[#555] bg-white pl-[2px] leading-[15px]"><Fit c="w-[18px]">152</Fit></span>
      <span className={`ml-[1px] w-[18px] ${SB}`}><svg width="11" height="10"><path d="M11 0V10L0 5Z" fill="#222" /></svg></span>
      <span className={`w-[18px] ${SB}`}><span className="h-[10px] w-[10px] bg-[#222]" /></span>
      <span className={`w-[18px] ${SB}`}><svg width="11" height="10"><path d="M0 0V10L11 5Z" fill="#222" /></svg></span>
      <Lens c="ml-[2px]"><path d="M4 6.500H9M6.500 4V9" /></Lens>
      <Lens c="ml-[2px]"><path d="M4 6.500H9" /></Lens>
      <Lens c="ml-[2px]"><path d="M5 9V5.500L6.500 4L8 5.500V9M5 7H8" /></Lens>
      <span className={`w-[17px] ${SB}`}><svg width="14" height="14"><path d="M2 2L5 4L4 7L1 6Q2 10 6 9L11 13.500L13.500 11L9 6Q9.500 2 5 1" fill="#ddd" stroke="#444" /></svg></span>
    </div>
  );
}

function MainWindow() {
  return (
    <div className="flex h-[592px] w-[1025px] shrink-0 flex-col border-t-2 border-r-[4px] border-b-[5px] border-l border-t-[#6b8dae] border-r-[#4b7196] border-b-[#5c7d9e] border-l-[#4b7196] bg-[#e3e6ee]">
      <TitleBar />
      <div className="h-[10px] shrink-0" />
      <Row1 />
      <Row2 />
      <div className="mt-[4px] flex pl-[4px]">
        <div className="flex w-[989px] shrink-0 flex-col">
          <div className="flex h-[16px] items-center justify-between bg-linear-to-b from-[#11799a] to-[#24507a] pl-[5px] text-[13px] font-bold leading-[16px] text-white">
            <Fit c="w-[41px]">코스피</Fit>
            <Fit c="w-[33px]">(1일)</Fit>
          </div>
          <Chart />
          <ScrollRow />
        </div>
        <div className="ml-[1px]"><SideTools /></div>
      </div>
      <div className="mt-[4px] flex flex-1 items-center justify-between border-t border-[#809db9] pr-[4px] pl-[1px]">
        <svg width="12" height="12"><circle cx="6" cy="6" r="5" fill="#bcd7f1" stroke="#6090c0" /><ellipse cx="6" cy="4" rx="3.500" ry="2" fill="#eef6fd" /><path d="M1 6.500H11" stroke="#6d9bc8" /></svg>
        <svg width="15" height="13"><rect x=".5" y=".5" width="13" height="11" fill="#f4f4f4" stroke="#888" /><rect x="2.500" y="2.500" width="9" height="7" fill="#fff" stroke="#666" /><path d="M11 6V13M7.500 9.500H15" stroke="#222" strokeWidth="2" /></svg>
      </div>
    </div>
  );
}

const LABEL = "flex h-full shrink-0 items-center justify-center border-r border-[#8e96a2] bg-linear-to-b from-[#e0e3e8] via-[#c4cad4] to-[#eceef1] font-bold text-black";

function Grip() {
  return <span className="mr-[6px] ml-[5px] h-[18px] w-[3px] shrink-0 bg-[repeating-linear-gradient(to_bottom,#8a8e96_0_2px,#eeeeee_2px_4px)]" />;
}

function Quote({ c, lw, label, price, pw, diff, dw, pct }: { c: string; lw: string; label: string; price: string; pw: string; diff: string; dw: string; pct: string }) {
  return (
    <div className={`flex h-full w-[317px] shrink-0 items-center border border-[#a4a9b2] bg-[#f6f5fe] ${c}`}>
      <span className={`w-[66px] pl-[5px] ${LABEL}`}><Fit c={lw}>{label}</Fit></span>
      <span className="flex w-[76px] shrink-0 items-center pl-[5px] text-[#e01808]">
        <Fit c={pw}>{price}</Fit>
        <svg width="9" height="8" className="ml-auto shrink-0"><path d="M4.500 0L9 8H0Z" fill="#f40808" /></svg>
      </span>
      <span className="w-[43px] shrink-0 pl-[4px] text-[#e01808]"><Fit c={dw}>{diff}</Fit></span>
      <span className="w-[5px] shrink-0">[</span>
      <Fit c="ml-[2px] w-[24px]">0.00</Fit>
      <Fit c="ml-[12px] w-[5px]">/</Fit>
      <span className="ml-[3px] text-[#e01808]"><Fit c="w-[30px]">{pct}</Fit></span>
      <span className="ml-[16px] w-[8px] shrink-0">]</span>
      <Arrow c="ml-auto h-full w-[18px]" />
    </div>
  );
}

const GRAY = "flex h-full w-[37px] shrink-0 items-center justify-center border border-[#7b808b] bg-linear-to-b from-[#b0b3bb] to-[#858a95] text-white";

function Ticker() {
  return (
    <div className="flex w-[1021px] flex-1 flex-col overflow-hidden border-r border-l-2 border-r-[#777] border-l-[#b4b4bc] bg-[#ececf0] text-[13px] leading-[17px] text-black">
      <div className="mt-[1px] flex h-[16px] shrink-0 items-center">
        <Grip />
        <Quote c="-ml-[1px]" lw="w-[39px]" label="종    합" price="6358.95" pw="w-[42px]" diff="101.50" dw="w-[36px]" pct="1.62%" />
        <Quote c="ml-[5px]" lw="w-[34px]" label="KP200" price="1000.03" pw="w-[42px]" diff="13.31" dw="w-[29px]" pct="1.35%" />
        <span className="ml-[3px] flex h-full w-[300px] shrink-0 items-center overflow-hidden border border-[#a4a9b2] bg-[#f6f5fe] pl-[3px]"><Fit c="w-[294px]">[ MT ] 애플 앱스토어, 텔레그램 삭제 해프닝…"성 학</Fit></span>
        <Arrow c="h-full w-[18px]" />
        <span className={`ml-[5px] ${GRAY}`}><Fit c="w-[23px]">지수</Fit></span>
      </div>
      <div className="mt-[1px] h-[2px] shrink-0 border-t border-white bg-[#66666a]" />
      <div className="mt-[2px] flex h-[20px] shrink-0 items-center">
        <Grip />
        <Quote c="-ml-[1px]" lw="w-[39px]" label="코스닥" price="780.72" pw="w-[36px]" diff="43.37" dw="w-[30px]" pct="5.88%" />
        <Quote c="ml-[5px]" lw="w-[39px]" label="선    물" price="1000.00" pw="w-[42px]" diff="7.65" dw="w-[24px]" pct="0.77%" />
        <span className="ml-[3px] flex h-full w-[300px] shrink-0 items-center border border-[#a4a9b2] text-white">
          <span className={`w-[67px] ${LABEL}`}><Fit c="w-[38px]">거래소</Fit></span>
          <span className="flex h-full w-[198px] shrink-0 items-center justify-center bg-[#d82034]"><Fit c="w-[36px]">788(1)</Fit></span>
          <span className="flex h-full w-[7px] shrink-0 items-center overflow-hidden bg-[#3aa808]">3</span>
          <span className="flex h-full w-[26px] shrink-0 items-center overflow-hidden bg-[#6488dc]"><Fit c="w-[26px]">86(0)</Fit></span>
        </span>
        <Arrow c="h-full w-[18px]" />
        <span className={`ml-[5px] ${GRAY}`}><Fit c="w-[23px]">설정</Fit></span>
      </div>
      <div className="mt-[1px] h-[2px] shrink-0 border-t border-white bg-[#66666a]" />
      <div className="mt-[3px] ml-[15px] flex h-[2px] shrink-0 gap-[2px]">
        <span className="w-[108px] bg-[#999]" /><span className="w-[108px] bg-[#999]" /><span className="w-[108px] bg-[#999]" /><span className="w-[108px] bg-[#555]" /><span className="w-[108px] bg-[#999]" />
      </div>
    </div>
  );
}

export default function App() {
  return (
    <div className="flex h-[720px] w-[1027px] flex-col overflow-hidden bg-[#c9d6ea] font-['Liberation_Sans_Narrow','Liberation_Sans','Noto_Sans_CJK_KR',sans-serif]">
      <div className="flex h-[3px] shrink-0 bg-[#c3d2e6]">
        <span className="ml-[36px] h-[1px] w-[22px] bg-[#5c4038]" />
        <span className="ml-[52px] h-[1px] w-[42px] bg-[#6a5448]" />
        <span className="ml-[66px] h-[1px] w-[54px] bg-[#54463e]" />
      </div>
      <div className="flex h-[717px]">
        <div className="flex w-[1025px] shrink-0 flex-col">
          <div className="flex h-[77px] shrink-0">
            <span className="w-[1px] bg-[#4b7196]" />
            <span className="w-[1px] bg-[#0a1420]" />
            <div className="flex w-[1022px] shrink-0 flex-col border-t border-r border-l-2 border-t-black border-r-[#3b5d80] border-l-[#4b6d90]">
              <Header />
              <Menu />
              <Toolbar />
            </div>
            <span className="w-[1px] bg-black" />
          </div>
          <MainWindow />
          <Ticker />
        </div>
        <div className="w-[2px] bg-linear-to-b from-[#c6d4ea] via-[#9fb4d8] via-50% to-[#6a5a62]" />
      </div>
    </div>
  );
}
